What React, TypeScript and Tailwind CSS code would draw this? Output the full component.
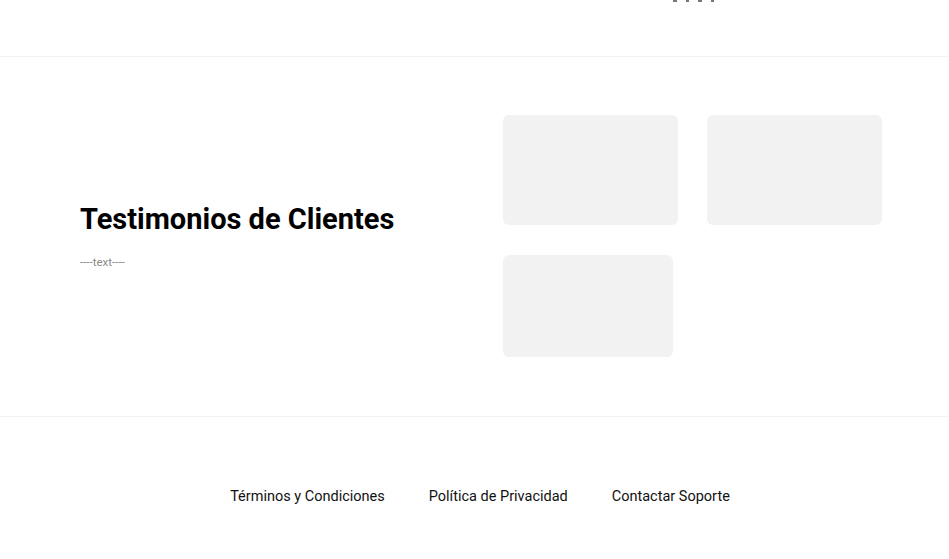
export default function App() {
  return (
    <div className="min-h-screen bg-white font-['Roboto',sans-serif] text-black">
      <header className="h-[57px] border-b border-[#f2f2f2]">
        <div className="flex gap-[9px] pl-[673px]">
          <span className="h-[2px] w-[4px] bg-[#777]" />
          <span className="h-[2px] w-[3px] bg-[#777]" />
          <span className="h-[2px] w-[4px] bg-[#777]" />
          <span className="h-[2px] w-[3px] bg-[#777]" />
        </div>
      </header>

      <section className="flex h-[360px] items-center border-b border-[#f2f2f2] pl-[80px]">
        <div className="w-[423px]">
          <h2 className="text-[29px] font-bold leading-[36px]">Testimonios de Clientes</h2>
          <p className="mt-[17px] text-[11.5px] text-[#8a8a8a]">----text----</p>
        </div>
        <div className="mb-[1px] flex flex-col gap-[30px]">
          <div className="flex gap-[29px]">
            <div className="h-[110px] w-[175px] rounded-md bg-[#f2f2f2]" />
            <div className="h-[110px] w-[175px] rounded-md bg-[#f2f2f2]" />
          </div>
          <div className="h-[102px] w-[170px] rounded-md bg-[#f2f2f2]" />
        </div>
      </section>

      <footer className="flex justify-center gap-[44px] pl-[11px] pt-[69px] text-[14.5px] text-[#111]">
        <a>Términos y Condiciones</a>
        <a>Política de Privacidad</a>
        <a>Contactar Soporte</a>
      </footer>
    </div>
  );
}
